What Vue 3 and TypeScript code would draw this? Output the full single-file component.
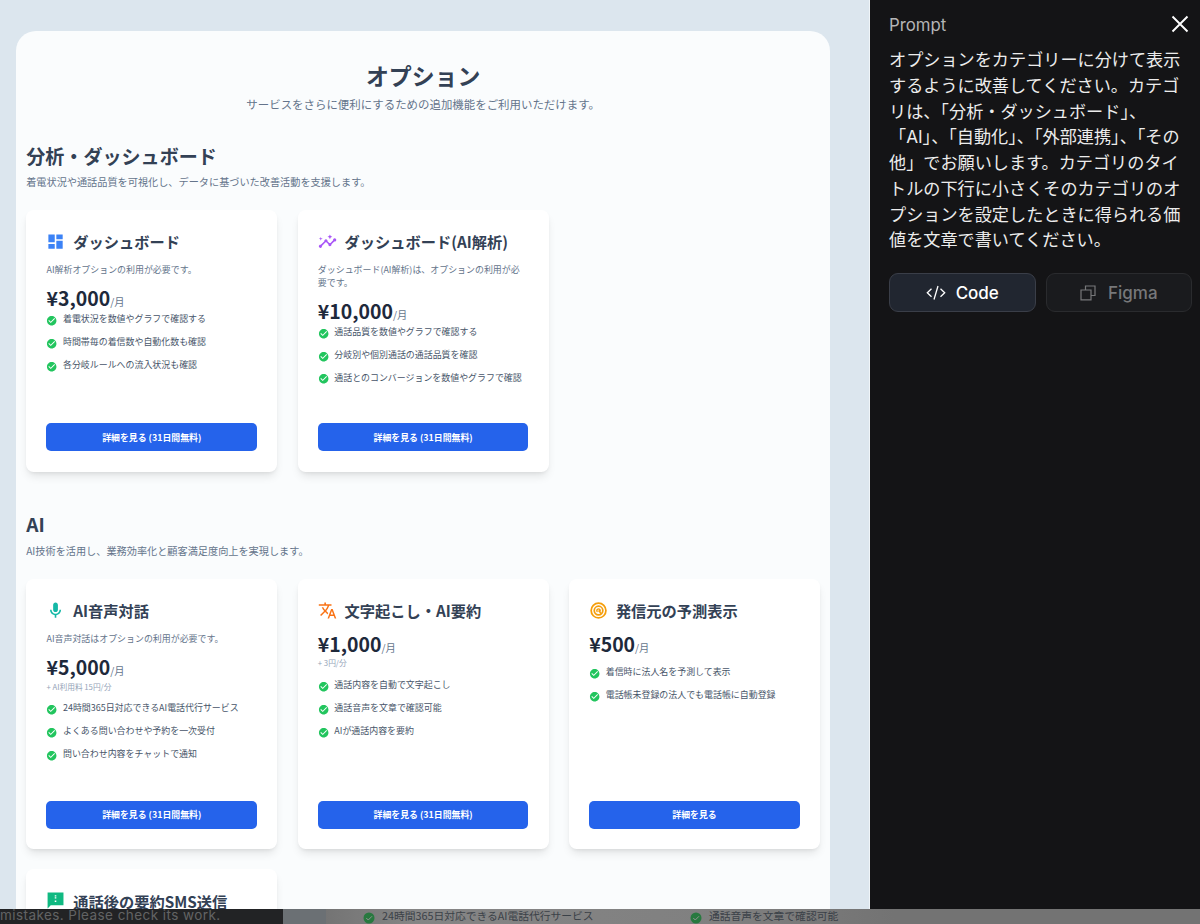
<script setup lang="ts">
interface Option {
  icon: string
  color: string
  title: string
  desc?: string
  price: string
  note?: string
  features: string[]
  action: string
  compact?: boolean
}

interface Category {
  title: string
  desc: string
  options: Option[]
}

const trial = '詳細を見る (31日間無料)'

const icons: Record<string, string> = {
  dashboard: 'M3 13h8V3H3v10zm0 8h8v-6H3v6zm10 0h8V11h-8v10zm0-18v6h8V3h-8z',
  insights:
    'M21 8c-1.45 0-2.26 1.44-1.93 2.51l-3.55 3.56c-.3-.09-.74-.09-1.04 0l-2.55-2.55C12.27 10.45 11.46 9 10 9c-1.45 0-2.27 1.44-1.93 2.52l-4.56 4.55C2.44 15.74 1 16.55 1 18c0 1.1.9 2 2 2 1.45 0 2.26-1.44 1.93-2.51l4.55-4.56c.3.09.74.09 1.04 0l2.55 2.55C12.73 16.55 13.54 18 15 18c1.45 0 2.27-1.44 1.93-2.52l3.56-3.55C21.56 12.26 23 11.45 23 10c0-1.1-.9-2-2-2zM15 9l.94-2.07L18 6l-2.06-.93L15 3l-.92 2.07L12 6l2.08.93zM3.5 11 4 9l2-.5L4 8l-.5-2L3 8l-2 .5L3 9z',
  mic: 'M12 14c1.66 0 3-1.34 3-3V5c0-1.66-1.34-3-3-3S9 3.34 9 5v6c0 1.66 1.34 3 3 3zm5-3c0 2.76-2.24 5-5 5s-5-2.24-5-5H5c0 3.53 2.61 6.43 6 6.92V21h2v-3.08c3.39-.49 6-3.39 6-6.92h-2z',
  translate:
    'M12.87 15.07l-2.54-2.51.03-.03c1.74-1.94 2.98-4.17 3.71-6.53H17V4h-7V2H8v2H1v1.99h11.17C11.5 7.92 10.44 9.75 9 11.35 8.07 10.32 7.3 9.19 6.69 8h-2c.73 1.63 1.73 3.17 2.98 4.56l-5.09 5.02L4 19l5-5 3.11 3.11.76-2.04zM18.5 10h-2L12 22h2l1.12-3h4.75L21 22h2l-4.5-12zm-2.62 7l1.62-4.33L19.12 17h-3.24z',
  sms: 'M22 2H2v20l4-4h16V2zM13 14h-2v-2h2v2zm0-4.500h-2V8h2v1.500zm0-2.500h-2V5.500h2V7z',
}

const categories: Category[] = [
  {
    title: '分析・ダッシュボード',
    desc: '着電状況や通話品質を可視化し、データに基づいた改善活動を支援します。',
    options: [
      {
        icon: 'dashboard',
        color: 'blue',
        title: 'ダッシュボード',
        desc: 'AI解析オプションの利用が必要です。',
        price: '¥3,000',
        features: ['着電状況を数値やグラフで確認する', '時間帯毎の着信数や自動化数も確認', '各分岐ルールへの流入状況も確認'],
        action: trial,
        compact: true,
      },
      {
        icon: 'insights',
        color: 'purple',
        title: 'ダッシュボード(AI解析)',
        desc: 'ダッシュボード(AI解析)は、オプションの利用が必要です。',
        price: '¥10,000',
        features: ['通話品質を数値やグラフで確認する', '分岐別や個別通話の通話品質を確認', '通話とのコンバージョンを数値やグラフで確認'],
        action: trial,
        compact: true,
      },
    ],
  },
  {
    title: 'AI',
    desc: 'AI技術を活用し、業務効率化と顧客満足度向上を実現します。',
    options: [
      {
        icon: 'mic',
        color: 'teal',
        title: 'AI音声対話',
        desc: 'AI音声対話はオプションの利用が必要です。',
        price: '¥5,000',
        note: '+ AI利用料 15円/分',
        features: ['24時間365日対応できるAI電話代行サービス', 'よくある問い合わせや予約を一次受付', '問い合わせ内容をチャットで通知'],
        action: trial,
      },
      {
        icon: 'translate',
        color: 'orange',
        title: '文字起こし・AI要約',
        price: '¥1,000',
        note: '+ 3円/分',
        features: ['通話内容を自動で文字起こし', '通話音声を文章で確認可能', 'AIが通話内容を要約'],
        action: trial,
      },
      {
        icon: 'target',
        color: 'amber',
        title: '発信元の予測表示',
        price: '¥500',
        features: ['着信時に法人名を予測して表示', '電話帳未登録の法人でも電話帳に自動登録'],
        action: '詳細を見る',
      },
      {
        icon: 'sms',
        color: 'green',
        title: '通話後の要約SMS送信',
        price: '¥500',
        features: [],
        action: trial,
      },
    ],
  },
]

const promptLines = [
  'オプションをカテゴリーに分けて表示',
  'するように改善してください。カテゴ',
  'リは、「分析・ダッシュボード」、',
  '「AI」、「自動化」、「外部連携」、「その',
  '他」でお願いします。カテゴリのタイ',
  'トルの下行に小さくそのカテゴリのオ',
  'プションを設定したときに得られる価',
  '値を文章で書いてください。',
]
</script>

<template>
  <div class="screen">
    <div class="workspace">
      <main class="preview">
        <div class="sheet">
          <header class="intro">
            <h1>オプション</h1>
            <p>サービスをさらに便利にするための追加機能をご利用いただけます。</p>
          </header>
          <section v-for="cat in categories" :key="cat.title" class="category">
            <h2>{{ cat.title }}</h2>
            <p class="category-desc">{{ cat.desc }}</p>
            <div class="grid">
              <article v-for="o in cat.options" :key="o.title" class="card" :class="{ compact: o.compact }">
                <div class="card-head">
                  <svg class="icon" :class="o.color" viewBox="0 0 24 24">
                    <g v-if="o.icon === 'target'" fill="none" stroke="currentColor" stroke-width="2.200">
                      <circle cx="12" cy="12" r="9.300" />
                      <circle cx="12" cy="12" r="5.400" />
                      <path d="M10.700 13.700a2.100 2.100 0 1 1 2.600 0M12 12l3.500 4" stroke-width="1.800" />
                    </g>
                    <path v-else fill="currentColor" :d="icons[o.icon]" />
                  </svg>
                  <h3>{{ o.title }}</h3>
                </div>
                <p v-if="o.desc" class="desc">{{ o.desc }}</p>
                <div class="price">{{ o.price }}<span>/月</span></div>
                <p v-if="o.note" class="note">{{ o.note }}</p>
                <ul>
                  <li v-for="f in o.features" :key="f">
                    <svg class="check" viewBox="0 0 24 24">
                      <path fill="currentColor" d="M12 2C6.480 2 2 6.480 2 12s4.480 10 10 10 10-4.480 10-10S17.520 2 12 2zm-2 15l-5-5 1.410-1.410L10 14.170l7.590-7.590L19 8l-9 9z" />
                    </svg>
                    <span>{{ f }}</span>
                  </li>
                </ul>
                <button type="button">{{ o.action }}</button>
              </article>
            </div>
          </section>
        </div>
      </main>
      <aside class="side">
        <div class="side-head">
          <span>Prompt</span>
          <svg class="close" viewBox="0 0 18 18"><path d="M1.500 1.500l15 15M16.500 1.500l-15 15" fill="none" stroke="currentColor" stroke-width="1.900" /></svg>
        </div>
        <p class="prompt"><span v-for="l in promptLines" :key="l">{{ l }}</span></p>
        <div class="side-actions">
          <button type="button" class="code">
            <svg class="code-icon" viewBox="0 0 20 16"><path d="M5.500 3.700L1.300 7.700l4.200 4M14.500 3.700l4.200 4-4.200 4M12 1L8 14.500" fill="none" stroke="currentColor" stroke-width="1.300" /></svg>
            Code
          </button>
          <button type="button" class="figma">
            <svg class="copy-icon" viewBox="0 0 16 16"><path d="M5.500 5V1h9.500v9.500h-4M1 5h10v9.800H1z" fill="none" stroke="currentColor" stroke-width="1.200" /></svg>
            Figma
          </button>
        </div>
      </aside>
    </div>
    <footer class="behind">
      <div class="disclaimer">mistakes. Please check its work.</div>
      <div class="behind-page">
        <div class="behind-sheet">
          <div class="behind-item first">
            <svg viewBox="0 0 24 24"><circle cx="12" cy="12" r="11" fill="#28793f" /><path d="M6.500 12l4 4 7.500-7.500" fill="none" stroke="#929292" stroke-width="2" /></svg>
            24時間365日対応できるAI電話代行サービス
          </div>
          <div class="behind-item">
            <svg viewBox="0 0 24 24"><circle cx="12" cy="12" r="11" fill="#28793f" /><path d="M6.500 12l4 4 7.500-7.500" fill="none" stroke="#929292" stroke-width="2" /></svg>
            通話音声を文章で確認可能
          </div>
        </div>
      </div>
    </footer>
  </div>
</template>

<style>
body {
  margin: 0;
  overflow: hidden;
}
</style>

<style scoped>
.screen {
  --u: 0.6357px;
  width: 1200px;
  height: 924px;
  overflow: hidden;
  display: flex;
  flex-direction: column;
  font-family: 'Noto Sans CJK JP', sans-serif;
}
h1, h2, h3, p, ul {
  margin: 0;
  padding: 0;
}
.workspace {
  height: 909px;
  flex: none;
  display: flex;
  overflow: hidden;
}
.preview {
  box-sizing: border-box;
  width: 869.500px;
  flex: none;
  height: 909px;
  overflow: hidden;
  padding: 31.400px 38.500px 0 16px;
  background: #dce6ee;
  border-right: 1px solid #f0f5f8;
}
.sheet {
  box-sizing: border-box;
  height: 1200px;
  background: #fafcfd;
  border-radius: 20px;
  padding: 31.600px 10px 0 10.200px;
}
.intro {
  text-align: center;
}
h1 {
  font-size: calc(36 * var(--u));
  line-height: 25.400px;
  color: #334155;
}
.intro p {
  margin-top: 7.800px;
  font-size: calc(18 * var(--u));
  line-height: 17.800px;
  color: #64748b;
}
.category {
  margin-top: 30.800px;
}
.category + .category {
  margin-top: 41.500px;
}
h2 {
  font-size: calc(30 * var(--u));
  line-height: 22.900px;
  color: #334155;
}
.category-desc {
  margin-top: 6.600px;
  font-size: calc(16 * var(--u));
  line-height: 15.300px;
  color: #64748b;
}
.category + .category .category-desc {
  margin-top: 7.200px;
}
.grid {
  margin-top: 20.200px;
  display: grid;
  grid-template-columns: repeat(3, 1fr);
  gap: 20.300px;
}
.card {
  box-sizing: border-box;
  display: flex;
  flex-direction: column;
  min-height: 270px;
  padding: 20.300px;
  background: #fff;
  border-radius: 7.600px;
  box-shadow: 0 6px 10px -2px rgb(0 0 0 / 10%), 0 2px 4px -2px rgb(0 0 0 / 10%);
}
.card.compact {
  min-height: 262px;
}
.card-head {
  display: flex;
  align-items: center;
  gap: 7.600px;
  height: 22.900px;
  margin-bottom: 11px;
}
.icon {
  width: 19.070px;
  height: 19.070px;
  flex: none;
}
.blue { color: #3b82f6; }
.purple { color: #a855f7; }
.teal { color: #14b8a6; }
.orange { color: #f97316; }
.amber { color: #f59e0b; }
.green { color: #10b981; }
h3 {
  font-size: calc(24 * var(--u));
  line-height: 20.300px;
  color: #334155;
  white-space: nowrap;
}
.desc {
  font-size: calc(14.080 * var(--u));
  line-height: 12.700px;
  margin-bottom: 10.600px;
  padding-right: 6px;
  color: #64748b;
}
.price {
  font-size: 19.450px;
  line-height: 22.900px;
  height: 22.900px;
  font-weight: 700;
  color: #1e293b;
}
.price span {
  font-size: calc(16.200 * var(--u));
  font-weight: 400;
  color: #64748b;
}
.note {
  margin-top: 2.500px;
  font-size: calc(12.150 * var(--u));
  line-height: 10.200px;
  color: #94a3b8;
}
ul {
  list-style: none;
  flex: 1;
  margin-top: 10.200px;
}
.note + ul {
  margin-top: 10.500px;
}
.compact ul {
  margin-top: 3px;
}
li {
  display: flex;
  align-items: flex-start;
  gap: 5.100px;
  height: 22.900px;
  font-size: calc(14.080 * var(--u));
  line-height: 12.700px;
  color: #475569;
  white-space: nowrap;
}
.check {
  width: 11.400px;
  height: 11.400px;
  flex: none;
  margin-top: 1.800px;
  color: #22c55e;
}
.card button {
  height: 28px;
  flex: none;
  padding: 0;
  border: 0;
  border-radius: 5px;
  background: #2563eb;
  color: #fff;
  font-family: inherit;
  font-size: calc(14 * var(--u));
  font-weight: 700;
}
.side {
  box-sizing: border-box;
  flex: 1;
  background: #141416;
  padding: 12px 8px 0 19.500px;
  font-family: Inter, 'Noto Sans CJK JP', sans-serif;
}
.side-head {
  display: flex;
  justify-content: space-between;
  align-items: center;
  height: 25px;
  padding-right: 3px;
  color: #b4b5b6;
  font-size: 16.800px;
}
.close {
  width: 18px;
  height: 18px;
  margin-bottom: 1.500px;
  color: #fff;
}
.prompt {
  margin-top: 10.300px;
  font-size: 17.150px;
  line-height: 25.700px;
  color: #ececec;
}
.prompt span {
  display: block;
  white-space: nowrap;
}
.side-actions {
  display: flex;
  gap: 10px;
  margin-top: 20.200px;
}
.side-actions button {
  box-sizing: border-box;
  flex: 1;
  height: 39px;
  display: flex;
  align-items: center;
  justify-content: center;
  gap: 10px;
  padding: 0;
  border: 1px solid #3a3e48;
  border-radius: 9px;
  background: #212630;
  color: #fff;
  font-family: inherit;
  font-size: 17px;
  font-weight: 500;
}
.side-actions .figma {
  background: #1a1b1e;
  border-color: #2a2b2e;
  color: #77787a;
  gap: 12px;
}
.code-icon {
  width: 20px;
  height: 16px;
}
.copy-icon {
  width: 16px;
  height: 16px;
}
.behind {
  height: 15px;
  flex: none;
  display: flex;
  overflow: hidden;
  background: #222325;
}
.disclaimer {
  width: 283px;
  flex: none;
  font-family: Inter, sans-serif;
  font-size: 13.500px;
  line-height: 13px;
  letter-spacing: 0.430px;
  white-space: nowrap;
  color: #626364;
}
.behind-page {
  flex: 1;
  padding-left: 43px;
  background: #6b7074;
}
.behind-sheet {
  height: 15px;
  padding-left: 37px;
  display: flex;
  background: linear-gradient(90deg, #747474, #858585 10%, #808080 45%, #737373 65%);
}
.behind-item {
  display: flex;
  align-items: flex-start;
  gap: 7px;
  font-size: 10.780px;
  line-height: 13px;
  color: #3b4148;
  white-space: nowrap;
}
.behind-item.first {
  width: 327px;
}
.behind-item svg {
  width: 12px;
  height: 12px;
  margin-top: 3px;
  flex: none;
}
</style>
